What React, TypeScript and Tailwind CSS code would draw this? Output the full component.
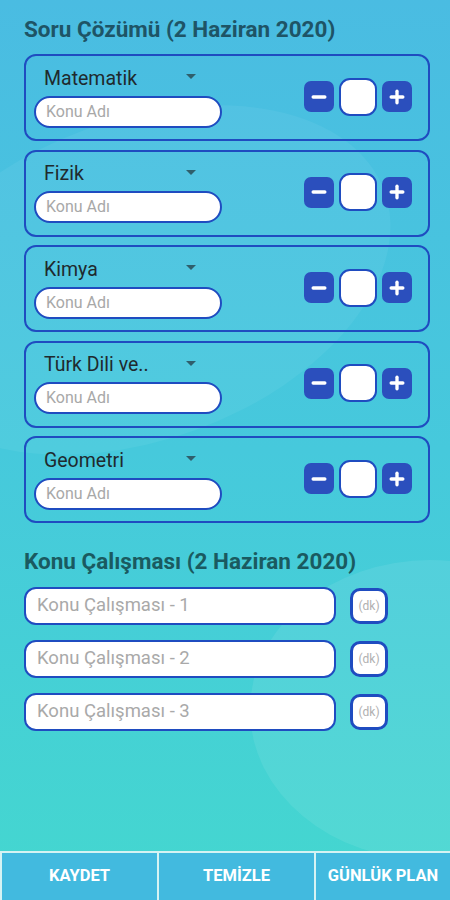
import { Minus, Plus } from "lucide-react";

const subjects = ["Matematik", "Fizik", "Kimya", "Türk Dili ve..", "Geometri"];
const studies = ["Konu Çalışması - 1", "Konu Çalışması - 2", "Konu Çalışması - 3"];

function SubjectCard({ name }: { name: string }) {
  return (
    <div className="h-[87px] rounded-[12px] border-2 border-[#1f4cc0] flex items-center justify-between pl-[8px] pr-[16px]">
      <div className="flex flex-col mb-[8px]">
        <div className="flex items-center w-[162px] pl-[10px] pt-[2px] h-[36px]">
          <span className="flex-1 text-[19.5px] text-[#1f2a2e]">{name}</span>
          <span className="w-0 h-0 border-l-[5px] border-r-[5px] border-t-[5px] border-l-transparent border-r-transparent border-t-[#2f5f6c] mb-[4px]" />
        </div>
        <div className="w-[188px] h-[32px] rounded-full bg-white border-2 border-[#1f4cc0] flex items-center px-[10px]">
          <span className="text-[16px] text-[#a8a8a8]">Konu Adı</span>
        </div>
      </div>
      <div className="flex items-center gap-[5px] mt-[-2px]">
        <button className="w-[30px] h-[31px] rounded-[7px] bg-[#2b4fbd] flex items-center justify-center">
          <Minus size={20} strokeWidth={4} color="white" />
        </button>
        <div className="w-[38px] h-[38px] rounded-[11px] bg-white border-2 border-[#1f4cc0]" />
        <button className="w-[30px] h-[31px] rounded-[7px] bg-[#2b4fbd] flex items-center justify-center">
          <Plus size={20} strokeWidth={4} color="white" />
        </button>
      </div>
    </div>
  );
}

export default function App() {
  return (
    <div
      className="relative w-[450px] h-[900px] overflow-hidden flex flex-col bg-gradient-to-b from-[#4abce2] via-[#46c9dc] to-[#44d7cf]"
      style={{ fontFamily: "Roboto, 'Noto Sans', sans-serif" }}
    >
      {/* decorative waves */}
      <div className="absolute -left-[120px] top-[120px] w-[520px] h-[320px] rounded-[50%] bg-white/5 rotate-[-20deg]" />
      <div className="absolute right-[-160px] bottom-[40px] w-[360px] h-[300px] rounded-[50%] bg-white/8" />

      <div className="relative flex-1 px-[24px] pt-[15px]">
        <h1 className="text-[22.5px] font-bold text-[#1e5466] leading-[28px]">Soru Çözümü (2 Haziran 2020)</h1>

        <div className="mt-[11px] flex flex-col gap-[8.5px] mr-[-4px]">
          {subjects.map((s) => (
            <SubjectCard key={s} name={s} />
          ))}
        </div>

        <h2 className="mt-[24px] text-[22.5px] font-bold text-[#1a5a60] leading-[28px]">Konu Çalışması (2 Haziran 2020)</h2>

        <div className="mt-[12px] flex flex-col gap-[15px]">
          {studies.map((s) => (
            <div key={s} className="flex items-center gap-[14px]">
              <div className="w-[312px] h-[38px] rounded-[12px] bg-white border-2 border-[#1f4cc0] flex items-center px-[11px]">
                <span className="text-[18.5px] text-[#a9a9a9]">{s}</span>
              </div>
              <div className="w-[38px] h-[36px] rounded-[10px] bg-white border-[3px] border-[#1f4cc0] flex items-center justify-center">
                <span className="text-[12px] text-[#b0b0b0]">(dk)</span>
              </div>
            </div>
          ))}
        </div>
      </div>

      <div className="relative flex h-[49px] border-t-2 border-[#d5f3f3]">
        {["KAYDET", "TEMİZLE", "GÜNLÜK PLAN"].map((t, i) => (
          <button
            key={t}
            className={
              "h-full bg-[#42badf] text-white font-bold text-[16.5px] flex items-center justify-center border-l-2 border-[#d5f3f3] " +
              (i === 0 ? "w-[157px]" : i === 1 ? "w-[157px]" : "flex-1")
            }
          >
            {t}
          </button>
        ))}
      </div>
    </div>
  );
}
